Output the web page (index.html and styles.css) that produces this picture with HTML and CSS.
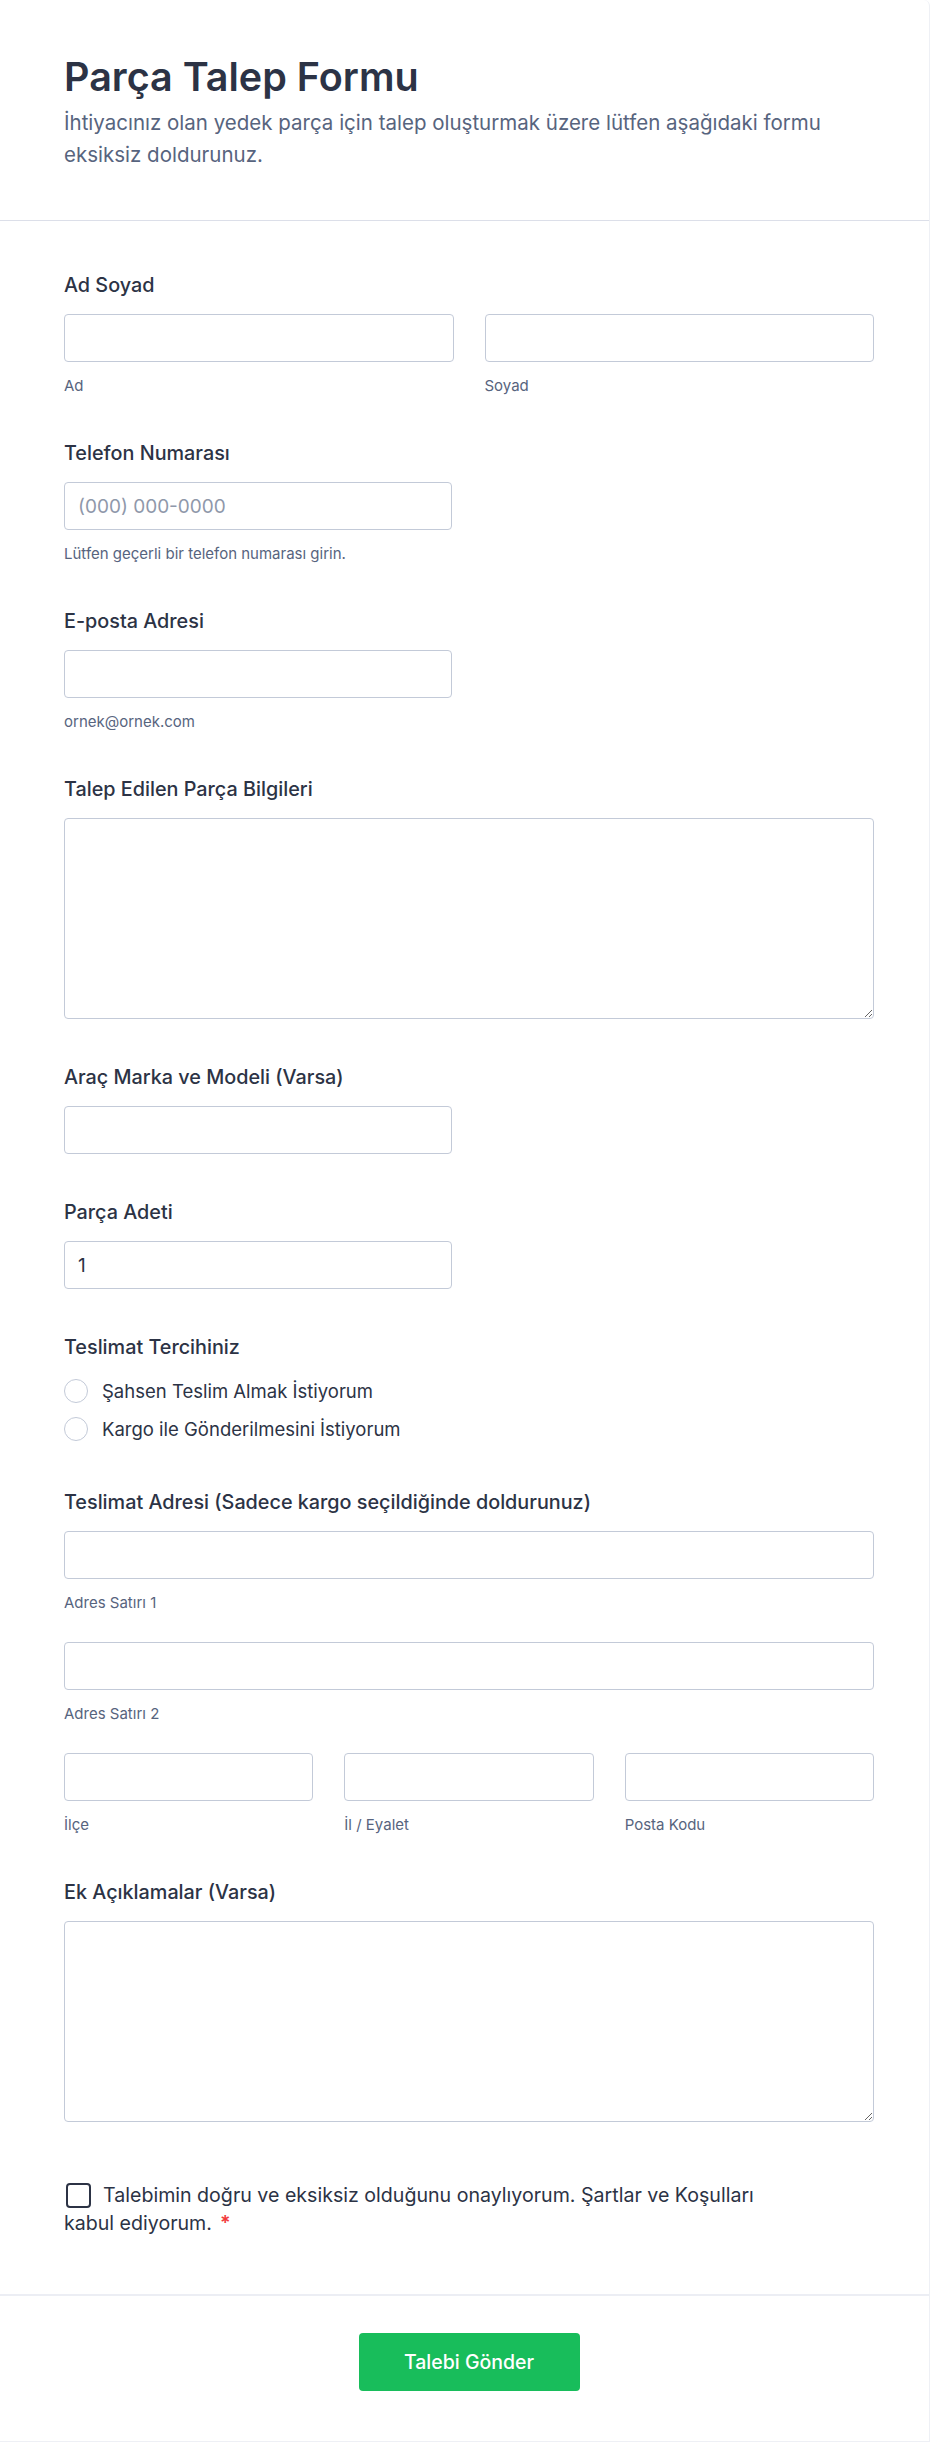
FILE: index.html
```html
<!DOCTYPE html>
<html lang="tr">
<head>
    <meta charset="UTF-8">
    <meta name="viewport" content="width=device-width, initial-scale=1.0">
    <title>Parça Talep Formu</title>
    <link rel="stylesheet" href="styles.css">
</head>
<body>

    <form class="form-card">
        <header class="form-header">
            <h1>Parça Talep Formu</h1>
            <p>İhtiyacınız olan yedek parça için talep oluşturmak üzere lütfen aşağıdaki formu eksiksiz doldurunuz.</p>
        </header>

        <div class="form-body">
            <div class="field">
                <label class="field-label" for="first">Ad Soyad</label>
                <div class="row two">
                    <div>
                        <input type="text" id="first" class="input">
                        <span class="sublabel">Ad</span>
                    </div>
                    <div>
                        <input type="text" id="last" class="input">
                        <span class="sublabel">Soyad</span>
                    </div>
                </div>
            </div>

            <div class="field">
                <label class="field-label" for="phone">Telefon Numarası</label>
                <input type="tel" id="phone" class="input half" placeholder="(000) 000-0000">
                <span class="sublabel">Lütfen geçerli bir telefon numarası girin.</span>
            </div>

            <div class="field">
                <label class="field-label" for="email">E-posta Adresi</label>
                <input type="email" id="email" class="input half">
                <span class="sublabel">ornek@ornek.com</span>
            </div>

            <div class="field">
                <label class="field-label" for="part">Talep Edilen Parça Bilgileri</label>
                <textarea id="part" class="input area"></textarea>
            </div>

            <div class="field">
                <label class="field-label" for="car">Araç Marka ve Modeli (Varsa)</label>
                <input type="text" id="car" class="input half">
            </div>

            <div class="field">
                <label class="field-label" for="qty">Parça Adeti</label>
                <input type="text" id="qty" class="input half" value="1">
            </div>

            <div class="field">
                <span class="field-label">Teslimat Tercihiniz</span>
                <div class="options">
                    <label class="option"><input type="radio" name="delivery" class="radio">Şahsen Teslim Almak İstiyorum</label>
                    <label class="option"><input type="radio" name="delivery" class="radio">Kargo ile Gönderilmesini İstiyorum</label>
                </div>
            </div>

            <div class="field">
                <label class="field-label" for="addr1">Teslimat Adresi (Sadece kargo seçildiğinde doldurunuz)</label>
                <input type="text" id="addr1" class="input">
                <span class="sublabel">Adres Satırı 1</span>
                <input type="text" id="addr2" class="input next">
                <span class="sublabel">Adres Satırı 2</span>
                <div class="row three next">
                    <div>
                        <input type="text" class="input">
                        <span class="sublabel">İlçe</span>
                    </div>
                    <div>
                        <input type="text" class="input">
                        <span class="sublabel">İl / Eyalet</span>
                    </div>
                    <div>
                        <input type="text" class="input">
                        <span class="sublabel">Posta Kodu</span>
                    </div>
                </div>
            </div>

            <div class="field">
                <label class="field-label" for="notes">Ek Açıklamalar (Varsa)</label>
                <textarea id="notes" class="input area"></textarea>
            </div>

            <div class="field terms">
                <label class="terms-text"><input type="checkbox" class="checkbox">Talebimin doğru ve eksiksiz olduğunu onaylıyorum. Şartlar ve Koşulları kabul ediyorum.<span class="required">*</span></label>
            </div>
        </div>

        <footer class="form-footer">
            <button type="button" class="submit">Talebi Gönder</button>
        </footer>
    </form>

</body>
</html>
```

FILE: styles.css
```css
*{
    box-sizing: border-box;
    margin: 0;
    padding: 0;
}

body{
    background: #ffffff;
    color: #2c3345;
    font-family: "Inter", "Noto Sans", sans-serif;
    font-size: 16px;
}

.form-card{
    width: 930px;
    border-right: 1px solid #eef0f5;
    border-bottom: 1px solid #eef0f5;
    border-top-right-radius: 6px;
}

.form-header{
    padding: 54px 55px 49px 64px;
    border-bottom: 1px solid #dcdfe9;
}

.form-header h1{
    font-size: 39.5px;
    line-height: 46px;
    font-weight: 600;
    color: #2c3345;
    margin-bottom: 7px;
}

.form-header p{
    font-size: 20.5px;
    line-height: 32px;
    color: #57647e;
    max-width: 780px;
}

.form-body{
    padding: 30px 55px 0 64px;
}

.field{
    padding: 24px 0;
}

.field-label{
    display: block;
    font-size: 19.8px;
    line-height: 20px;
    font-weight: 500;
    color: #2c3345;
    margin-bottom: 19px;
}

.input{
    display: block;
    width: 100%;
    height: 48px;
    padding: 0 13px;
    border: 1px solid #c3cad8;
    border-radius: 4px;
    background: #ffffff;
    color: #2c3345;
    font-family: inherit;
    font-size: 19px;
}

.input::placeholder{
    color: #8f98aa;
}

.half{
    width: 388px;
}

.area{
    height: 201px;
    padding: 12px 13px;
    resize: vertical;
}

.sublabel{
    display: block;
    margin-top: 15px;
    font-size: 15px;
    line-height: 18px;
    color: #57647e;
}

.row{
    display: grid;
    gap: 31px;
}

.row.two{
    grid-template-columns: 1fr 1fr;
}

.row.three{
    grid-template-columns: 1fr 1fr 1fr;
}

.next{
    margin-top: 30px;
}

.options{
    display: flex;
    flex-direction: column;
    gap: 8px;
}

.option{
    display: flex;
    align-items: center;
    gap: 14px;
    height: 30px;
    font-size: 18.5px;
    line-height: 24px;
    color: #2c3345;
}

.radio{
    appearance: none;
    width: 24px;
    height: 24px;
    border: 1.5px solid #c3cad8;
    border-radius: 50%;
    background: #ffffff;
    flex-shrink: 0;
}

.terms{
    padding-top: 35px;
    padding-bottom: 57px;
}

.terms-text{
    display: block;
    max-width: 720px;
    font-size: 19.6px;
    line-height: 28px;
    color: #2c3345;
}

.checkbox{
    appearance: none;
    display: inline-block;
    width: 25px;
    height: 25px;
    margin: 0 12px 0 2px;
    border: 2px solid #2c3345;
    border-radius: 4px;
    vertical-align: -6px;
    background: #ffffff;
}

.required{
    color: #f23a3c;
    margin-left: 8px;
    font-weight: 600;
}

.form-footer{
    display: flex;
    justify-content: center;
    padding: 37px 55px 50px 64px;
    border-top: 2px solid #eceef4;
}

.submit{
    width: 221px;
    height: 58px;
    border: none;
    border-radius: 4px;
    background: #18bd5b;
    color: #ffffff;
    font-family: inherit;
    font-size: 19.5px;
    font-weight: 500;
    cursor: pointer;
}
```
